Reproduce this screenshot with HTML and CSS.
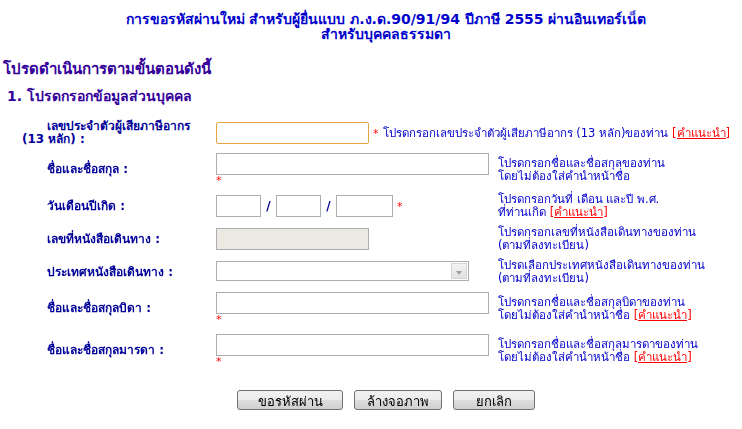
FILE: index.html
```html
<!DOCTYPE html>
<html lang="th">

<head>
    <meta charset="UTF-8">
    <title>การขอรหัสผ่านใหม่</title>
    <link rel="stylesheet" href="styles.css">
</head>

<body>
    <div class="title">
        การขอรหัสผ่านใหม่ สำหรับผู้ยื่นแบบ ภ.ง.ด.90/91/94 ปีภาษี 2555 ผ่านอินเทอร์เน็ต<br>
        สำหรับบุคคลธรรมดา
    </div>

    <div class="steps">โปรดดำเนินการตามขั้นตอนดังนี้</div>
    <div class="step">1. โปรดกรอกข้อมูลส่วนบุคคล</div>

    <form class="form">
        <!-- เลขประจำตัวผู้เสียภาษี -->
        <div class="label">เลขประจำตัวผู้เสียภาษีอากร (13 หลัก) :</div>
        <div class="field wide">
            <input type="text" class="txt tin" autofocus>
            <span class="req">*</span>
            <span class="hint">โปรดกรอกเลขประจำตัวผู้เสียภาษีอากร (13 หลัก)ของท่าน <a href="#" class="help">[คำแนะนำ]</a></span>
        </div>

        <div class="label">ชื่อและชื่อสกุล :</div>
        <div class="field">
            <input type="text" class="txt name">
            <div class="req">*</div>
        </div>
        <div class="hint">โปรดกรอกชื่อและชื่อสกุลของท่าน<br>โดยไม่ต้องใส่คำนำหน้าชื่อ</div>

        <div class="label">วันเดือนปีเกิด :</div>
        <div class="field date">
            <input type="text" class="txt dd">
            <span class="sep">/</span>
            <input type="text" class="txt mm">
            <span class="sep">/</span>
            <input type="text" class="txt yy">
            <span class="req">*</span>
        </div>
        <div class="hint">โปรดกรอกวันที่ เดือน และปี พ.ศ.<br>ที่ท่านเกิด <a href="#" class="help">[คำแนะนำ]</a></div>

        <div class="label">เลขที่หนังสือเดินทาง :</div>
        <div class="field">
            <input type="text" class="txt tin" disabled>
        </div>
        <div class="hint">โปรดกรอกเลขที่หนังสือเดินทางของท่าน<br>(ตามที่ลงทะเบียน)</div>

        <div class="label">ประเทศหนังสือเดินทาง :</div>
        <div class="field">
            <div class="combo">
                <select disabled></select>
                <span class="drop"></span>
            </div>
        </div>
        <div class="hint">โปรดเลือกประเทศหนังสือเดินทางของท่าน<br>(ตามที่ลงทะเบียน)</div>

        <div class="label">ชื่อและชื่อสกุลบิดา :</div>
        <div class="field">
            <input type="text" class="txt name">
            <div class="req">*</div>
        </div>
        <div class="hint">โปรดกรอกชื่อและชื่อสกุลบิดาของท่าน<br>โดยไม่ต้องใส่คำนำหน้าชื่อ <a href="#" class="help">[คำแนะนำ]</a></div>

        <div class="label mother">ชื่อและชื่อสกุลมารดา :</div>
        <div class="field mother">
            <input type="text" class="txt name">
            <div class="req">*</div>
        </div>
        <div class="hint mother">โปรดกรอกชื่อและชื่อสกุลมารดาของท่าน<br>โดยไม่ต้องใส่คำนำหน้าชื่อ <a href="#" class="help">[คำแนะนำ]</a></div>
    </form>

    <div class="actions">
        <button type="button" class="btn b1">ขอรหัสผ่าน</button>
        <button type="button" class="btn b2">ล้างจอภาพ</button>
        <button type="button" class="btn b3">ยกเลิก</button>
    </div>
</body>

</html>
```

FILE: styles.css
```css
body {
    margin: 0;
    background: #fff;
    font-family: Tahoma, "DejaVu Sans", sans-serif;
    font-size: 12px;
    color: #0000cc;
}

.title {
    padding: 12px 0 0 30px;
    text-align: center;
    font-weight: bold;
    font-size: 14px;
    line-height: 15px;
    color: #0000cc;
}

.steps {
    margin: 19px 0 0 3px;
    font-weight: bold;
    font-size: 15px;
    line-height: 17px;
    color: #330099;
}

.step {
    margin: 10px 0 0 7px;
    font-weight: bold;
    font-size: 14px;
    line-height: 16px;
    color: #330099;
}

.form {
    display: grid;
    grid-template-columns: 194px 282px 1fr;
    align-items: center;
    row-gap: 7px;
    margin: 16px 0 0;
    padding-left: 22px;
}

.label {
    text-indent: 25px;
    font-weight: bold;
    line-height: 13px;
    color: #000099;
    padding-right: 8px;
}

/* แถวสุดท้ายห่างจากแถวบนมากกว่าแถวอื่นเล็กน้อย */
.mother {
    margin-top: 2px;
}

.field.wide {
    grid-column: span 2;
    display: flex;
    align-items: center;
    white-space: nowrap;
}

.txt {
    box-sizing: border-box;
    height: 22px;
    margin: 0;
    padding: 1px 4px;
    border: 1px solid #abadb3;
    font: inherit;
    color: #000;
    background: #fff;
}

.txt:focus {
    outline: none;
    border-color: #e5a642;
    border-radius: 2px;
}

.txt:disabled {
    background: #ebe9e1;
}

.tin {
    width: 153px;
}

.name {
    width: 273px;
}

.dd,
.mm {
    width: 45px;
}

.yy {
    width: 57px;
}

.date {
    display: flex;
    align-items: center;
}

.sep {
    width: 15px;
    text-align: center;
    font-weight: bold;
    color: #000099;
}

.req {
    color: #ff0000;
    font-size: 11px;
    line-height: 11px;
}

.wide .req {
    margin: 0 4px;
}

.date .req {
    margin-left: 4px;
}

.hint {
    font-size: 11.5px;
    line-height: 13px;
    color: #0000cc;
}

.help {
    color: #ff0000;
    text-decoration: underline;
}

.combo {
    box-sizing: border-box;
    display: flex;
    width: 253px;
    height: 20px;
    margin-top: -2px;
    border: 1px solid #abadb3;
    background: #fff;
}

.combo select {
    flex: 1;
    border: 0;
    background: transparent;
    appearance: none;
}

.drop {
    position: relative;
    width: 16px;
    margin: 1px;
    background: linear-gradient(#f4f4f4, #e2e2e2);
    border: 1px solid #d4d4d4;
    box-sizing: border-box;
}

/* ลูกศรของกล่องเลือก */
.drop::after {
    content: "";
    position: absolute;
    left: 4px;
    top: 7px;
    border-left: 3px solid transparent;
    border-right: 3px solid transparent;
    border-top: 4px solid #a0a0a0;
}

.actions {
    display: flex;
    justify-content: center;
    gap: 11px;
    margin-top: 23px;
    padding-left: 30px;
}

.btn {
    height: 20px;
    padding: 0;
    border: 1px solid #707070;
    border-radius: 3px;
    background: linear-gradient(#f2f2f2 0%, #ebebeb 50%, #dddddd 51%, #cfcfcf 100%);
    font-family: Tahoma, "DejaVu Sans", sans-serif;
    font-size: 13px;
    color: #000;
}

.b1 {
    width: 106px;
}

.b2 {
    width: 88px;
}

.b3 {
    width: 82px;
}
```
